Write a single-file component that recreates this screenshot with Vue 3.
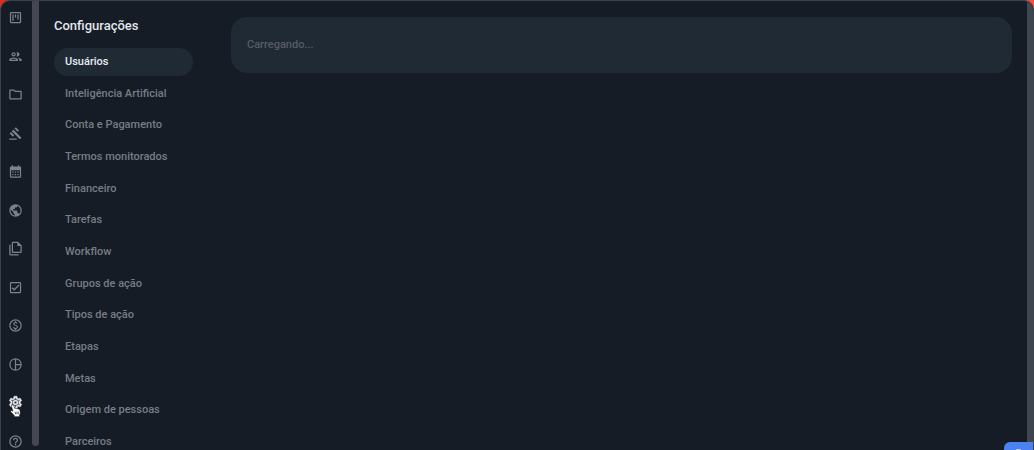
<script setup>
import { ref } from 'vue'

const modules = [
  { name: 'Painel', d: 'M19 3H5a2 2 0 0 0-2 2v14a2 2 0 0 0 2 2h14a2 2 0 0 0 2-2V5a2 2 0 0 0-2-2zm0 16H5V5h14v14zM7 7h2v10H7zm4 0h2v5h-2zm4 0h2v8h-2z' },
  { name: 'Pessoas', d: 'M9 13.75c-2.34 0-7 1.17-7 3.5V19h14v-1.75c0-2.33-4.66-3.5-7-3.5zM4.34 17c.84-.58 2.87-1.25 4.66-1.25s3.82.67 4.66 1.25H4.34zM9 12c1.93 0 3.5-1.57 3.5-3.5S10.93 5 9 5 5.5 6.57 5.5 8.5 7.07 12 9 12zm0-5c.83 0 1.5.67 1.5 1.5S9.83 10 9 10s-1.5-.67-1.5-1.5S8.17 7 9 7zm7.04 6.81c1.16.84 1.96 1.96 1.96 3.44V19h4v-1.75c0-2.02-3.5-3.17-5.96-3.44zM15 12c1.93 0 3.5-1.57 3.5-3.5S16.93 5 15 5c-.54 0-1.04.13-1.5.35.63.89 1 1.98 1 3.15s-.37 2.26-1 3.15c.46.22.96.35 1.5.35z' },
  { name: 'Pastas', d: 'M9.17 6l2 2H20v10H4V6h5.17M10 4H4c-1.1 0-1.99.9-1.99 2L2 18c0 1.1.9 2 2 2h16c1.1 0 2-.9 2-2V8c0-1.1-.9-2-2-2h-8l-2-2z' },
  { name: 'Processos', d: 'M2 20h12v2H2zM6 8.200l2.500-2.500 13 13-2.500 2.500zM12.600 1.800l5.200 5.200-2.300 2.300-5.200-5.200zM4.800 9.600l5.200 5.200-2.300 2.300-5.200-5.200z' },
  { name: 'Agenda', d: 'M19 4h-1V2h-2v2H8V2H6v2H5a2 2 0 0 0-2 2v14a2 2 0 0 0 2 2h14a2 2 0 0 0 2-2V6a2 2 0 0 0-2-2zm0 16H5V10h14v10zM7 12h2v2H7zm4 0h2v2h-2zm4 0h2v2h-2zm-8 4h2v2H7zm4 0h2v2h-2zm4 0h2v2h-2z' },
  { name: 'Publicações', d: 'M12 2a10 10 0 1 0 0 20 10 10 0 0 0 0-20zM4 12c0-.61.08-1.21.21-1.78L8.99 15v1c0 1.1.9 2 2 2v1.93C7.06 19.43 4 16.07 4 12zm13.89 5.4c-.26-.81-1-1.4-1.9-1.4h-1v-3c0-.55-.45-1-1-1h-6v-2h2c.55 0 1-.45 1-1V7h2c1.1 0 2-.9 2-2v-.41C17.92 5.77 20 8.65 20 12c0 2.08-.81 3.98-2.11 5.4z' },
  { name: 'Documentos', d: 'M16 1H8a2 2 0 0 0-2 2v14a2 2 0 0 0 2 2h12a2 2 0 0 0 2-2V7l-6-6zm4 16H8V3h7v5h5v9zM4 6H2v15a2 2 0 0 0 2 2h13v-2H4V6z' },
  { name: 'Tarefas', d: 'M19 3H5a2 2 0 0 0-2 2v14a2 2 0 0 0 2 2h14a2 2 0 0 0 2-2V5a2 2 0 0 0-2-2zm0 16H5V5h14v14zM17.99 9l-1.41-1.42-6.59 6.59-2.58-2.57-1.42 1.41 4 3.99z' },
  { name: 'Financeiro', d: 'M12 2a10 10 0 1 0 0 20 10 10 0 0 0 0-20zm0 18a8 8 0 1 1 0-16 8 8 0 0 1 0 16zm.89-8.9c-1.78-.59-2.64-.96-2.64-1.9 0-1.02 1.11-1.39 1.81-1.39 1.31 0 1.79.99 1.9 1.34l1.58-.67c-.15-.45-.82-1.92-2.54-2.24V5h-2v1.26c-2.48.56-2.49 2.86-2.49 2.96 0 2.27 2.25 2.91 3.35 3.31 1.58.56 2.28 1.07 2.28 2.03 0 1.13-1.05 1.61-1.98 1.61-1.82 0-2.34-1.87-2.4-2.09l-1.66.67c.63 2.19 2.28 2.78 2.9 2.96V19h2v-1.24c.4-.09 2.9-.59 2.9-3.22 0-1.39-.61-2.61-3.01-3.44z' },
  { name: 'Relatórios', d: 'M12 2a10 10 0 1 0 0 20 10 10 0 0 0 0-20zM11 19.93A8 8 0 0 1 11 4.07v15.86zM13 4.07A8 8 0 0 1 19.93 11H13V4.07zM13 13h6.93A8 8 0 0 1 13 19.93V13z' },
  { name: 'Configurações', d: 'M19.43 12.98c.04-.32.07-.64.07-.98s-.03-.66-.07-.98l2.11-1.65c.19-.15.24-.42.12-.64l-2-3.46c-.12-.22-.39-.3-.61-.22l-2.49 1c-.52-.4-1.08-.73-1.69-.98l-.38-2.65A.49.49 0 0 0 14 2h-4c-.25 0-.46.18-.49.42l-.38 2.65c-.61.25-1.17.59-1.69.98l-2.49-1c-.23-.09-.49 0-.61.22l-2 3.46c-.13.22-.07.49.12.64l2.11 1.65c-.04.32-.07.65-.07.98s.03.66.07.98l-2.11 1.65c-.19.15-.24.42-.12.64l2 3.46c.12.22.39.3.61.22l2.49-1c.52.4 1.08.73 1.69.98l.38 2.65c.03.24.24.42.49.42h4c.25 0 .46-.18.49-.42l.38-2.65c.61-.25 1.17-.59 1.69-.98l2.49 1c.23.09.49 0 .61-.22l2-3.46c.12-.22.07-.49-.12-.64l-2.11-1.65zm-1.98-1.71c.04.31.05.52.05.73s-.02.43-.05.73l-.14 1.13.89.7 1.08.84-.7 1.21-1.27-.51-1.04-.42-.9.68c-.43.32-.84.56-1.25.73l-1.06.43-.16 1.13-.2 1.35h-1.4l-.35-2.48-1.06-.43c-.43-.18-.83-.41-1.23-.71l-.91-.7-1.06.43-1.27.51-.7-1.21 1.97-1.54-.14-1.13c-.03-.31-.05-.54-.05-.74s.02-.43.05-.73l.14-1.13-1.97-1.54.7-1.21 2.31.93.9-.68c.43-.32.84-.56 1.25-.73l1.06-.43.36-2.48h1.39l.35 2.48 1.06.43c.43.18.83.41 1.23.71l.91.7 2.33-.94.7 1.21-1.96 1.54.14 1.13zM12 8a4 4 0 1 0 0 8 4 4 0 0 0 0-8zm0 6a2 2 0 1 1 0-4 2 2 0 0 1 0 4z' },
  { name: 'Ajuda', d: 'M11 16h2v2h-2zM12 2a10 10 0 1 0 0 20 10 10 0 0 0 0-20zm0 18a8 8 0 1 1 0-16 8 8 0 0 1 0 16zm0-14a4 4 0 0 0-4 4h2c0-1.1.9-2 2-2s2 .9 2 2c0 2-3 1.75-3 5h2c0-2.25 3-2.5 3-5a4 4 0 0 0-4-4z' },
]

const sections = [
  'Usuários',
  'Inteligência Artificial',
  'Conta e Pagamento',
  'Termos monitorados',
  'Financeiro',
  'Tarefas',
  'Workflow',
  'Grupos de ação',
  'Tipos de ação',
  'Etapas',
  'Metas',
  'Origem de pessoas',
  'Parceiros',
]

const activeModule = ref('Configurações')
const activeSection = ref('Usuários')
</script>

<template>
  <div class="window">
    <nav class="rail" aria-label="Módulos">
      <button
        v-for="m in modules"
        :key="m.name"
        type="button"
        class="rail-button"
        :class="{ active: m.name === activeModule }"
        :aria-label="m.name"
        @click="activeModule = m.name"
      >
        <svg class="icon" viewBox="0 0 24 24" aria-hidden="true"><path :d="m.d" /></svg>
        <svg v-if="m.name === activeModule" class="pointer" viewBox="0 0 24 24" aria-hidden="true">
          <path d="M7.500 3c1 0 1.700.6 2 1.500L11 9c.7-1 2.300-.9 2.800.2.800-.8 2.300-.5 2.700.6 1-.5 2.200.1 2.500 1.200l.7 3.500c.3 2-.3 3.600-1.200 5V22H10v-2c-1.700-1.300-3.300-3.700-5.500-5.500-1.200-1 0-3 1.800-2.300l1.500 1L5.600 5.500C5.300 4.200 6.200 3 7.500 3z" />
          <path class="fingers" d="M11.500 14l.7 4M14 14l.4 4M16.500 14v4" />
        </svg>
      </button>
    </nav>
    <div class="divider"></div>
    <aside class="side">
      <h1>Configurações</h1>
      <nav class="menu" aria-label="Configurações">
        <a
          v-for="s in sections"
          :key="s"
          href="#"
          :class="{ active: s === activeSection }"
          @click.prevent="activeSection = s"
        >{{ s }}</a>
      </nav>
    </aside>
    <main class="content">
      <section class="card" aria-live="polite">Carregando...</section>
    </main>
    <div class="scroll"></div>
    <button type="button" class="chat" aria-label="Abrir chat"><span class="chat-dot"></span></button>
  </div>
</template>

<style>
body {
  background: linear-gradient(90deg, #d8301f 50%, #ff4a35 50%) top / 100% 24px no-repeat #14151b;
}
</style>

<style scoped>
.window {
  box-sizing: border-box;
  position: relative;
  display: flex;
  height: 100vh;
  overflow: hidden;
  border: solid #3b414a;
  border-width: 1px 1px 0;
  border-radius: 10px 10px 0 0;
  background: #151c25;
  color: #777c86;
  font: 500 11px/16px Roboto, "Liberation Sans", sans-serif;
}
.rail {
  box-sizing: border-box;
  display: flex;
  flex-direction: column;
  justify-content: space-between;
  align-items: center;
  width: 31px;
  padding: 8px 2px 0 0;
}
.rail-button {
  position: relative;
  display: flex;
  padding: 1px;
  border: 0;
  background: none;
  color: #7c828b;
  cursor: pointer;
}
.rail-button.active {
  color: #e3e7ee;
}
.icon {
  width: 15px;
  height: 15px;
  fill: currentColor;
}
.rail-button.active .icon {
  stroke: currentColor;
  stroke-width: 1;
}
.pointer {
  position: absolute;
  top: 9px;
  left: 1px;
  width: 15px;
  height: 15px;
  fill: #fff;
  stroke: #10141b;
  stroke-width: 1;
}
.fingers {
  fill: none;
}
.divider {
  width: 7px;
  margin-bottom: 4px;
  border-radius: 0 0 4px 4px;
  background: #454850;
}
.side {
  display: flex;
  flex-direction: column;
  width: 139px;
  margin-left: 15px;
  padding-top: 15px;
}
h1 {
  margin: 0 0 12px;
  color: #e2e6ed;
  font-size: 13px;
  font-weight: 500;
  line-height: 20px;
}
.menu {
  display: flex;
  flex: 1;
  flex-direction: column;
  justify-content: space-between;
  margin-bottom: -6px;
}
.menu a {
  padding: 6px 11px;
  border-radius: 14px;
  color: inherit;
  text-decoration: none;
  white-space: nowrap;
}
.menu a.active {
  background: #202a35;
  color: #e6eaf0;
}
.content {
  flex: 1;
  padding: 16px 15px 16px 38px;
}
.card {
  padding: 20px 16px;
  border-radius: 16px;
  background: #202a35;
  color: #565c66;
}
.scroll {
  width: 6px;
  background: #3f464f;
}
.chat {
  position: absolute;
  right: 0;
  bottom: 0;
  display: flex;
  justify-content: center;
  align-items: flex-end;
  width: 29px;
  height: 8px;
  padding: 0;
  border: 0;
  border-radius: 6px 0 0 0;
  background: #4b82f0;
}
.chat-dot {
  width: 5px;
  height: 1px;
  border-radius: 4px 4px 0 0;
  background: #b9d0ff;
}
</style>
